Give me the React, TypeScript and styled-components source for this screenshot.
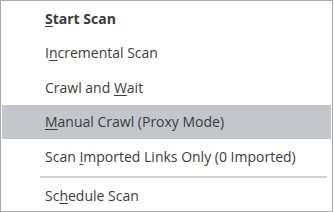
import styled, { createGlobalStyle } from "styled-components";

const GlobalStyle = createGlobalStyle`
  html, body {
    margin: 0;
    padding: 0;
    background: #ffffff;
  }
`;

const Menu = styled.ul`
  box-sizing: border-box;
  width: 333px;
  height: 212px;
  margin: 0;
  padding: 0 1px;
  list-style: none;
  border: 1px solid #a9a9a9;
  background: #ffffff;
  font-family: "Open Sans", "Noto Sans", sans-serif;
  font-size: 14px;
  color: #3b3b3b;
`;

const Item = styled.li<{ $active?: boolean; $bold?: boolean }>`
  display: flex;
  align-items: center;
  height: 34.5px;
  padding-left: 43px;
  background: ${(p) => (p.$active ? "#c3c7cb" : "transparent")};
  font-weight: ${(p) => (p.$bold ? 700 : 400)};
  white-space: nowrap;
  cursor: default;
`;

const Label = styled.span`
  white-space: pre;
`;

const Key = styled.span`
  text-decoration: underline;
  text-underline-offset: 2px;
`;

const Separator = styled.li`
  height: 2px;
  margin: 2px 4px 1px 38px;
  background: #d3d3d3;
`;

export default function App() {
  return (
    <>
      <GlobalStyle />
      <Menu>
        <Item $bold>
          <Label>
            <Key>S</Key>tart Scan
          </Label>
        </Item>
        <Item>
          <Label>
            I<Key>n</Key>cremental Scan
          </Label>
        </Item>
        <Item>
          <Label>
            Crawl and <Key>W</Key>ait
          </Label>
        </Item>
        <Item $active>
          <Label>
            <Key>M</Key>anual Crawl (Proxy Mode)
          </Label>
        </Item>
        <Item>
          <Label>
            Scan <Key>I</Key>mported Links Only (0 Imported)
          </Label>
        </Item>
        <Separator />
        <Item>
          <Label>
            Sc<Key>h</Key>edule Scan
          </Label>
        </Item>
      </Menu>
    </>
  );
}
